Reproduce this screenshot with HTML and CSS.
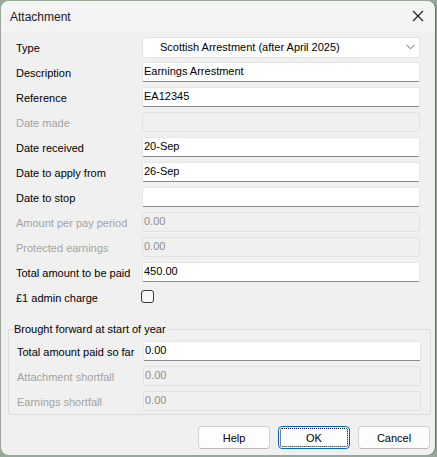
FILE: index.html
```html
<!DOCTYPE html>
<html>
<head>
<meta charset="utf-8">
<link rel="stylesheet" href="styles.css">
</head>
<body>
<div class="window">
  <div class="titlebar">
    <span class="title">Attachment</span>
    <svg class="close" width="12" height="12" viewBox="0 0 12 12"><path d="M1 1 L11 11 M11 1 L1 11" stroke="#1a1a1a" stroke-width="1.1" fill="none"/></svg>
  </div>
  <div class="content">
    <div class="form">
      <label class="lbl">Type</label>
      <div class="select"><span>Scottish Arrestment (after April 2025)</span>
        <svg class="chev" width="9" height="6" viewBox="0 0 9 6"><path d="M0.5 0.8 L4.5 4.8 L8.5 0.8" stroke="#606060" stroke-width="1" fill="none"/></svg>
      </div>
      <label class="lbl">Description</label>
      <div class="input">Earnings Arrestment</div>
      <label class="lbl">Reference</label>
      <div class="input">EA12345</div>
      <label class="lbl dis">Date made</label>
      <div class="input disabled"></div>
      <label class="lbl">Date received</label>
      <div class="input">20-Sep</div>
      <label class="lbl">Date to apply from</label>
      <div class="input">26-Sep</div>
      <label class="lbl">Date to stop</label>
      <div class="input"></div>
      <label class="lbl dis">Amount per pay period</label>
      <div class="input disabled">0.00</div>
      <label class="lbl dis">Protected earnings</label>
      <div class="input disabled">0.00</div>
      <label class="lbl">Total amount to be paid</label>
      <div class="input">450.00</div>
      <label class="lbl">£1 admin charge</label>
      <div class="checkcell"><span class="checkbox"></span></div>
    </div>
    <fieldset class="group">
      <legend>Brought forward at start of year</legend>
      <div class="form inner">
        <label class="lbl">Total amount paid so far</label>
        <div class="input">0.00</div>
        <label class="lbl dis">Attachment shortfall</label>
        <div class="input disabled">0.00</div>
        <label class="lbl dis">Earnings shortfall</label>
        <div class="input disabled">0.00</div>
      </div>
    </fieldset>
    <div class="buttons">
      <button class="btn">Help</button>
      <button class="btn default"><span class="focus">OK</span></button>
      <button class="btn">Cancel</button>
    </div>
  </div>
</div>
</body>
</html>
```
FILE: styles.css
```css
html, body {
  margin: 0;
  padding: 0;
  background: #98a898;
}
body {
  width: 437px;
  height: 457px;
  overflow: hidden;
  font-family: "Liberation Sans", Arial, sans-serif;
  font-size: 11px;
  color: #000;
}
.window {
  margin: 1px 0 0 1px;
  width: 434px;
  height: 454px;
  background: #f0f0f0;
  border-radius: 8px;
  overflow: hidden;
  box-shadow: 1px 0 0 #6a6a6a;
}
.titlebar {
  height: 31px;
  background: #f3f3f3;
  display: flex;
  align-items: center;
  justify-content: space-between;
  padding: 0 11px 0 9px;
}
.title {
  font-size: 12px;
  color: #1a1a1a;
}
.close {
  display: block;
  margin-top: -1px;
}
.content {
  padding: 5px 0 0 15px;
}
.form {
  display: grid;
  grid-template-columns: 126px 278px;
  grid-auto-rows: 20px;
  row-gap: 5px;
  align-items: center;
}
.lbl {
  white-space: nowrap;
  color: #000;
  font-size: 11px;
  padding-top: 1px;
}
.lbl.dis {
  color: #a3a3a3;
}
.input, .select {
  box-sizing: border-box;
  height: 20px;
  background: #fff;
  border: 1px solid #e6e6e6;
  border-bottom-color: #8a8a8a;
  border-radius: 2px;
  padding: 0 0 0 1px;
  font-family: "Liberation Sans", Arial, sans-serif;
  font-size: 11px;
  line-height: 17px;
  white-space: nowrap;
  overflow: hidden;
}
.input.disabled {
  background: #f0f0f0;
  border-color: #e2e2e2;
  color: #8e8e8e;
}
.select {
  height: 21px;
  border: 1px solid #e3e3e3;
  border-radius: 3px;
  padding-left: 17px;
  display: flex;
  align-items: center;
  justify-content: space-between;
  padding-right: 4px;
  font-size: 11px;
}
.checkcell {
  display: flex;
  align-items: center;
}
.checkbox {
  display: block;
  box-sizing: border-box;
  width: 13px;
  height: 13px;
  margin: -1px 0 0 -1px;
  border: 1px solid #3a3a3a;
  border-radius: 3px;
  background: #f8f8f8;
}
.group {
  margin: 16px 0 0 -8px;
  width: 423px;
  box-sizing: border-box;
  border: 1px solid #dcdcdc;
  border-radius: 2px;
  padding: 6px 0 7px 8px;
  height: 92px;
}
.group legend {
  padding: 0 1px 0 0;
  margin-left: -3px;
  font-size: 11px;
}
.buttons {
  display: flex;
  justify-content: flex-end;
  gap: 8px;
  margin: 11px 0 0 0;
  width: 414px;
}
.btn {
  box-sizing: border-box;
  width: 72px;
  height: 23px;
  background: #fdfdfd;
  border: 1px solid #d0d0d0;
  border-bottom-color: #b8b8b8;
  border-radius: 4px;
  font-family: "Liberation Sans", Arial, sans-serif;
  font-size: 11px;
  color: #000;
  padding: 0;
}
.btn.default {
  border: 1px solid #0067c0;
  padding: 1px;
}
.focus {
  display: flex;
  align-items: center;
  justify-content: center;
  height: 100%;
  box-sizing: border-box;
  border: 1px dotted #000;
  border-radius: 2px;
}
```
